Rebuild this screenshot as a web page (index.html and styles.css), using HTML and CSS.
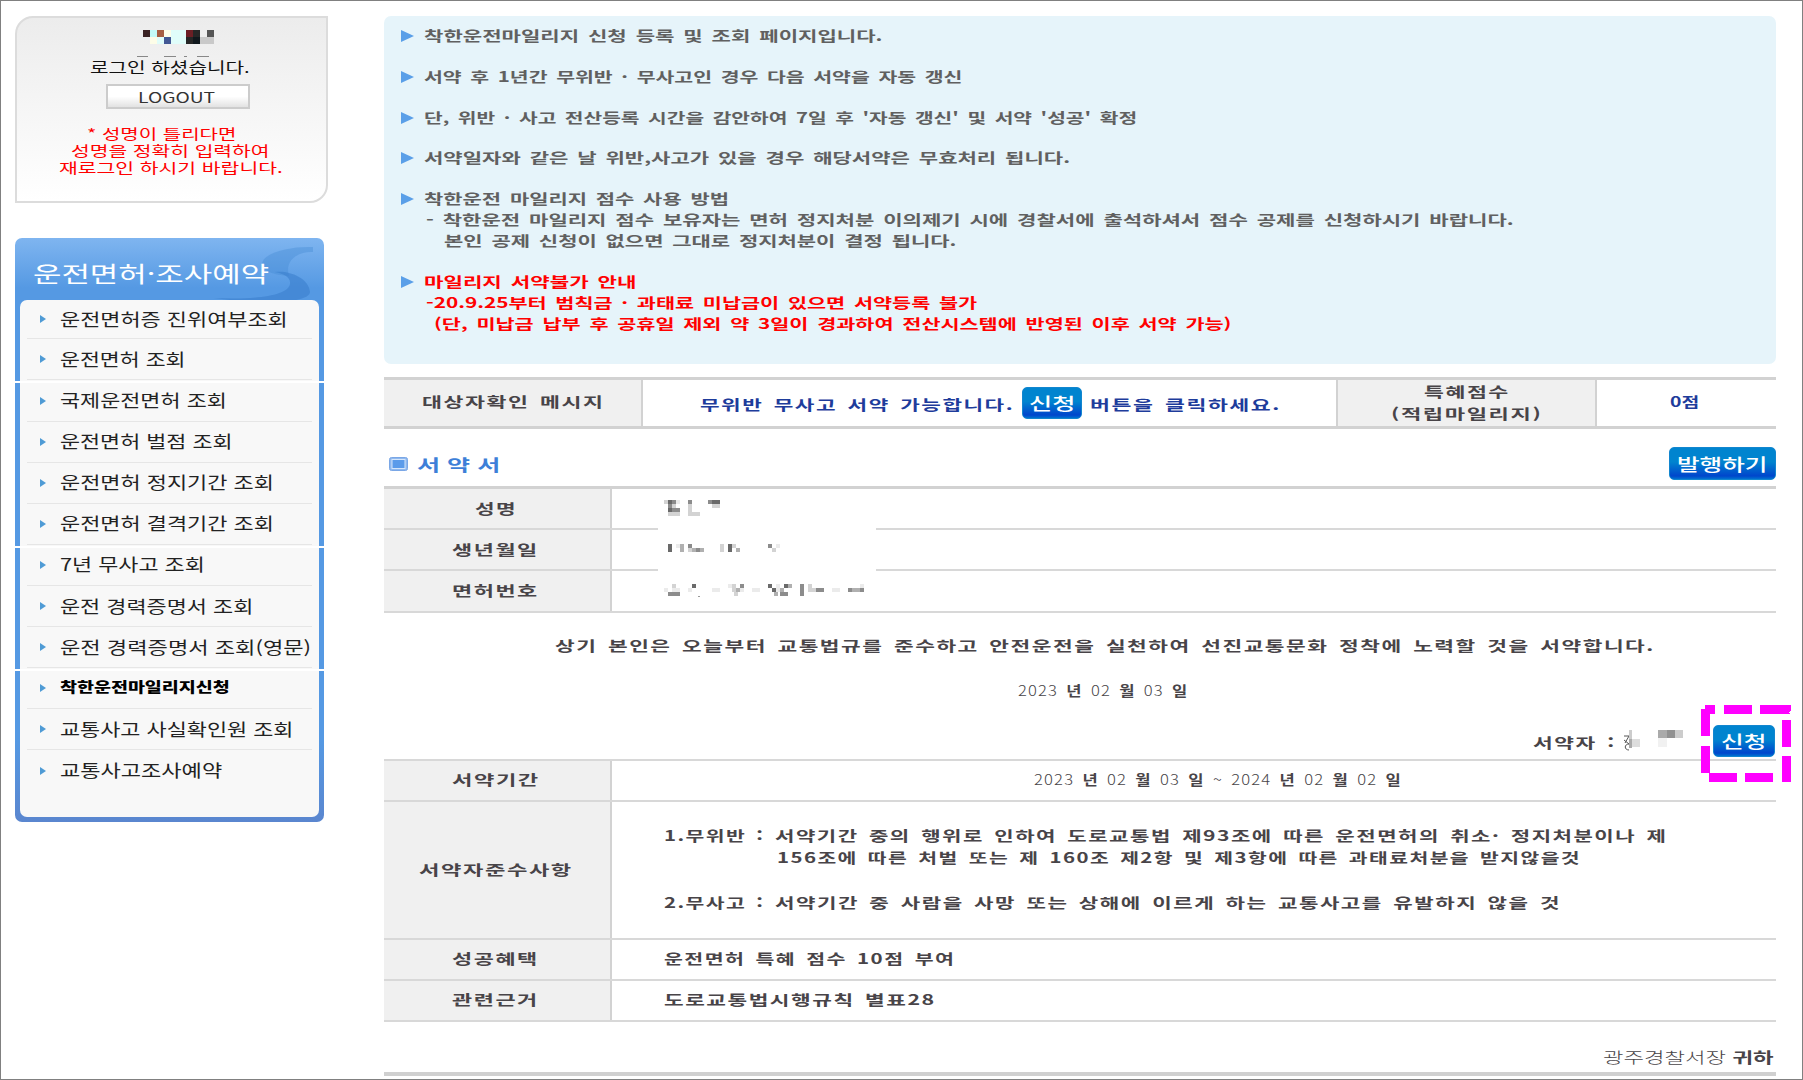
FILE: index.html
```html
<!DOCTYPE html>
<html lang="ko">
<head>
  <meta charset="UTF-8">
  <meta name="viewport" content="width=device-width, initial-scale=1.0">
  <title>착한운전마일리지신청</title>
  <link rel="stylesheet" href="styles.css">
</head>
<body>
  <div class="page">
    <div class="sidebar">
      <div class="login">
        <svg class="user-name" width="72" height="29" shape-rendering="crispEdges">
          <path fill="#3a2224" d="M0 0h7v7H0z"/><path fill="#c3fbf8" d="M7 0h7v7H7z"/><path fill="#a65f43" d="M14 0h7v7h-7z"/><path fill="#fdfde8" d="M21 0h7v7h-7zM7 7h7v7H7z"/>
          <path fill="#e0fdfa" d="M28 0h15v14H28zM14 7h7v7h-7z"/><path fill="#6b1f25" d="M43 0h7v7h-7z"/><path fill="#262626" d="M50 0h7v7h-7zM43 7h7v7h-7z"/><path fill="#555" d="M64 0h7v7h-7z"/>
          <path fill="#425894" d="M21 7h7v7h-7z"/><path fill="#10181d" d="M50 7h7v7h-7z"/><path fill="#c9c9c9" d="M57 7h14v7H57z"/>
          <path fill="#888" d="M-6 26h11v1H-6zM21 26h12v1H21zM41 26h3v1h-3zM54 26h12v1H54z"/>
        </svg>
        <div class="login-msg"><span class="t" data-w="160">로그인 하셨습니다.</span></div>
        <button class="logout"><span class="t" data-w="77">LOGOUT</span></button>
        <div class="warn">
          <div><span class="t" data-w="150">* 성명이 틀리다면</span></div>
          <div><span class="t" data-w="199">성명을 정확히 입력하여</span></div>
          <div><span class="t" data-w="223">재로그인 하시기 바랍니다.</span></div>
        </div>
      </div>

      <div class="menu">
        <div class="menu-title">
          <svg class="swirl" width="110" height="62" viewBox="0 0 110 62">
            <path fill="#3f86d2" opacity=".35" d="M104 9C80 8 54 15 53 26c0 7 12 11 27 12C75 22 90 13 104 14z"/>
            <path fill="#3a7fcd" opacity=".6" d="M66 34c14-2 34 6 35 20 0 10-42 14-96 6 40 2 74-2 76-14 1-6-5-10-15-12z"/>
          </svg>
          <span class="t" data-w="236">운전면허·조사예약</span>
        </div>
        <ul class="menu-list">
          <li><span class="t" data-w="228">운전면허증 진위여부조회</span></li>
          <li class="cut"><span class="t" data-w="126">운전면허 조회</span></li>
          <li><span class="t" data-w="167">국제운전면허 조회</span></li>
          <li><span class="t" data-w="173">운전면허 벌점 조회</span></li>
          <li><span class="t" data-w="214">운전면허 정지기간 조회</span></li>
          <li class="cut"><span class="t" data-w="214">운전면허 결격기간 조회</span></li>
          <li><span class="t" data-w="145">7년 무사고 조회</span></li>
          <li><span class="t" data-w="193">운전 경력증명서 조회</span></li>
          <li class="cut"><span class="t" data-w="251">운전 경력증명서 조회(영문)</span></li>
          <li class="active"><span class="t" data-w="170">착한운전마일리지신청</span></li>
          <li><span class="t" data-w="234">교통사고 사실확인원 조회</span></li>
          <li><span class="t" data-w="162">교통사고조사예약</span></li>
        </ul>
      </div>
    </div>

    <div class="content">
      <ul class="notice">
        <li><span class="t" data-w="459">착한운전마일리지 신청 등록 및 조회 페이지입니다.</span></li>
        <li><span class="t" data-w="538">서약 후 1년간 무위반 · 무사고인 경우 다음 서약을 자동 갱신</span></li>
        <li><span class="t" data-w="713">단, 위반 · 사고 전산등록 시간을 감안하여 7일 후 '자동 갱신' 및 서약 '성공' 확정</span></li>
        <li><span class="t" data-w="646">서약일자와 같은 날 위반,사고가 있을 경우 해당서약은 무효처리 됩니다.</span></li>
        <li>
          <span class="t" data-w="305">착한운전 마일리지 점수 사용 방법</span>
          <p class="dash"><span class="t" data-w="1088">- 착한운전 마일리지 점수 보유자는 면허 정지처분 이의제기 시에 경찰서에 출석하셔서 점수 공제를 신청하시기 바랍니다.</span></p>
          <p class="indent"><span class="t" data-w="512">본인 공제 신청이 없으면 그대로 정지처분이 결정 됩니다.</span></p>
        </li>
        <li class="red">
          <span class="t" data-w="213">마일리지 서약불가 안내</span>
          <p class="dash"><span class="t" data-w="551">-20.9.25부터 범칙금 · 과태료 미납금이 있으면 서약등록 불가</span></p>
          <p class="paren"><span class="t" data-w="797">(단, 미납금 납부 후 공휴일 제외 약 3일이 경과하여 전산시스템에 반영된 이후 서약 가능)</span></p>
        </li>
      </ul>

      <div class="status">
        <div class="status-label"><span class="t" data-w="181">대상자확인 메시지</span></div>
        <div class="status-msg">
          <span class="t" data-w="313">무위반 무사고 서약 가능합니다.</span>
          <button class="btn btn-apply"><span class="t" data-w="46">신청</span></button>
          <span class="t" data-w="190">버튼을 클릭하세요.</span>
        </div>
        <div class="status-label point">
          <span class="t" data-w="85">특혜점수</span>
          <span class="t" data-w="150">(적립마일리지)</span>
        </div>
        <div class="status-point"><span class="t" data-w="29">0점</span></div>
      </div>

      <div class="heading">
        <svg width="19" height="14" viewBox="0 0 19 14">
          <rect x=".5" y=".5" width="18" height="13" rx="2" fill="#8fb8ee" stroke="#7aa7e6"/>
          <rect x="3" y="2.5" width="13" height="9" fill="#5b9bea" stroke="#d5e6fb"/>
        </svg>
        <span class="t" data-w="83">서 약 서</span>
        <button class="btn btn-issue"><span class="t" data-w="91">발행하기</span></button>
      </div>

      <div class="table personal">
        <div class="tr"><div class="th"><span class="t" data-w="41">성명</span></div><div class="td"></div></div>
        <div class="tr"><div class="th"><span class="t" data-w="86">생년월일</span></div><div class="td"></div></div>
        <div class="tr"><div class="th"><span class="t" data-w="86">면허번호</span></div><div class="td"></div></div>
        <svg class="mask" width="224" height="110" shape-rendering="crispEdges">
          <path fill="#fff" d="M2 0h218v110H2z"/>
          <path fill="#6a6a6a" d="M12 6h4v4h-4zM56 6h8v4h-8zM12 14h4v4h-4zM12 50h4v8h-4zM72 50h4v8h-4zM36 90h4v4h-4zM112 90h4v4h-4zM128 90h4v4h-4zM116 94h4v4h-4z"/>
          <path fill="#8c8c8c" d="M16 6h4v4h-4zM32 6h4v4h-4zM52 6h4v4h-4zM12 10h4v4h-4zM16 14h8v4h-8zM32 50h4v4h-4zM40 54h4v4h-4zM112 50h4v4h-4zM12 98h12v4H12zM144 90h4v12h-4zM192 94h4v4h-4zM204 94h4v4h-4zM160 94h8v4h-8zM84 90h4v4h-4zM124 98h8v4h-8z"/>
          <path fill="#b0b0b0" d="M24 50h4v8h-4zM36 54h4v4h-4zM44 54h4v4h-4zM80 54h4v4h-4zM80 94h4v4h-4zM124 94h4v4h-4zM132 90h4v4h-4zM118 98h4v4h-4zM196 94h8v4h-8z"/>
          <path fill="#d3d3d3" d="M8 6h4v4H8zM16 10h4v4h-4zM32 10h4v8h-4zM56 10h8v4h-8zM12 18h12v4H12zM32 18h12v4H32zM32 54h4v4h-4zM64 50h4v8h-4zM76 50h4v4h-4zM116 54h4v4h-4zM16 90h4v4h-4zM76 90h4v8h-4zM78 98h4v4h-4zM152 90h4v8h-4zM156 94h4v4h-4z"/>
          <path fill="#ebebeb" d="M20 6h4v4h-4zM20 50h4v4h-4zM120 50h4v4h-4zM8 94h4v4H8zM16 94h8v4h-8zM32 94h4v4h-4zM56 94h8v4h-8zM72 90h4v4h-4zM84 94h4v4h-4zM96 94h8v4h-8zM120 90h4v8h-4zM176 94h8v4h-8zM204 90h4v4h-4z"/>
          <path fill="#999" d="M42 102h2v1h-2z"/>
        </svg>
      </div>

      <div class="pledge">
        <div class="pledge-text"><span class="t" data-w="1098">상기 본인은 오늘부터 교통법규를 준수하고 안전운전을 실천하여 선진교통문화 정착에 노력할 것을 서약합니다.</span></div>
        <div class="pledge-date"><span class="t" data-w="169"><i>2023</i> 년 <i>02</i> 월 <i>03</i> 일</span></div>
        <div class="signer">
          <span class="t" data-w="81">서약자 :</span>
          <svg width="45" height="22" shape-rendering="crispEdges">
            <path fill="none" stroke="#555" shape-rendering="auto" d="M2 6h5l-4 7M2 10l5 4M7 14c-5 0-5 6 0 6"/>
            <path fill="#ccc" d="M7 0h3v9H7z"/><path fill="#aaa" d="M7 9h3v9H7zM36 0h9v8h-9z"/><path fill="#ddd" d="M10 9h8v8h-8z"/>
            <path fill="#f1f1f1" d="M36 8h9v9h-9z"/>
          </svg>
          <svg width="16" height="22" shape-rendering="crispEdges"><path fill="#919191" d="M0 0h8v8H0z"/><path fill="#ccc" d="M8 0h8v8H8z"/></svg>
          <button class="btn btn-sign"><span class="t" data-w="45">신청</span></button>
        </div>
      </div>

      <div class="table terms">
        <div class="tr"><div class="th"><span class="t" data-w="87">서약기간</span></div>
          <div class="td period"><span class="t" data-w="367"><i>2023</i> 년 <i>02</i> 월 <i>03</i> 일 <i>~ 2024</i> 년 <i>02</i> 월 <i>02</i> 일</span></div></div>
        <div class="tr rules"><div class="th"><span class="t" data-w="152">서약자준수사항</span></div>
          <div class="td">
            <div class="rule">
              <span class="t" data-w="99">1.무위반 :</span>
              <div>
                <span class="t" data-w="891">서약기간 중의 행위로 인하여 도로교통법 제93조에 따른 운전면허의 취소· 정지처분이나 제</span>
                <span class="t second" data-w="803">156조에 따른 처벌 또는 제 160조 제2항 및 제3항에 따른 과태료처분을 받지않을것</span>
              </div>
            </div>
            <div class="rule">
              <span class="t" data-w="99">2.무사고 :</span>
              <div><span class="t" data-w="784">서약기간 중 사람을 사망 또는 상해에 이르게 하는 교통사고를 유발하지 않을 것</span></div>
            </div>
          </div></div>
        <div class="tr"><div class="th"><span class="t" data-w="86">성공혜택</span></div>
          <div class="td"><span class="t" data-w="290">운전면허 특혜 점수 10점 부여</span></div></div>
        <div class="tr"><div class="th"><span class="t" data-w="86">관련근거</span></div>
          <div class="td"><span class="t" data-w="270">도로교통법시행규칙 별표28</span></div></div>
      </div>

      <div class="receiver"><span class="t" data-w="171"><i>광주경찰서장</i> 귀하</span></div>
    </div>

    <svg class="marker" width="90" height="78" shape-rendering="crispEdges">
      <path fill="#f0f" d="M4 0h10v9H4zM23 0h28v9H23zM59 0h31v6l-3 1 3 2H59zM0 4h9v27H0zM0 41h9v27H0zM81 15h9v27h-9zM81 51h9v26h-9zM8 68h28v9H8zM44 68h28v9H44z"/>
    </svg>
  </div>
  <script src="fit.js"></script>
</body>
</html>
```
FILE: styles.css
```css
* {
  box-sizing: border-box;
}
body {
  margin: 0;
  background: #fff;
  font-family: "Noto Sans CJK KR", "Liberation Sans", sans-serif;
  font-size: 14px;
  color: #484448;
}
ul {
  list-style: none;
  margin: 0;
  padding: 0;
}
p {
  margin: 0;
}
i {
  font-style: normal;
  font-weight: 300;
}
button {
  font-family: inherit;
  border: none;
  padding: 0;
  cursor: pointer;
}
.t {
  display: inline-block;
  white-space: pre;
  transform-origin: 0 50%;
}
.page {
  position: relative;
  display: flex;
  width: 1803px;
  height: 1080px;
  border: 1px solid #808080;
  padding: 15px 0 0 14px;
  overflow: hidden;
}

/* left column */
.sidebar {
  width: 368.6px;
  flex: none;
}
.login {
  width: 312.5px;
  height: 187px;
  padding-top: 12px;
  border: 2px solid #dcdcdc;
  border-radius: 18px 0 18px 0;
  background: linear-gradient(#ececec, #fff);
  display: flex;
  flex-direction: column;
}
.user-name {
  margin-left: 126px;
  overflow: visible;
  flex: none;
}
.login-msg {
  margin-left: 73px;
  height: 20px;
  line-height: 16px;
  color: #111;
}
.login-msg .t {
  font-size: 15px;
}
.logout {
  width: 144px;
  height: 25px;
  margin: 5px 0 0 89px;
  padding-right: 2px;
  border: 2px solid #ccc;
  background: linear-gradient(#fff 50%, #e2e2e2);
  color: #333;
  font-size: 14px;
  line-height: 18px;
}
.logout .t {
  margin-top: -3px;
}
.warn {
  margin-top: 16px;
  padding-right: 2px;
  color: #f00;
  text-align: center;
  line-height: 17px;
}
.warn div:first-child {
  padding-right: 16px;
}
.menu {
  width: 309px;
  height: 584px;
  margin-top: 35px;
  padding: 0 5px;
  border-radius: 7px;
  background: linear-gradient(#7fb5f0, #5599e3 50px, #5599e3 500px, #5a86cf);
}
.menu-title {
  position: relative;
  height: 62px;
  padding: 0 0 0 13px;
  color: #fff;
  font-size: 22px;
  font-weight: 400;
  line-height: 68px;
}
.swirl {
  position: absolute;
  right: 0;
  top: 0;
}
.menu-title .t {
  position: relative;
}
.menu-list {
  height: 517px;
  border-radius: 7px;
  background: #f8f8f8;
}
.menu-list li {
  position: relative;
  display: flex;
  align-items: center;
  height: 41.1px;
  margin: 0 7px;
  padding-left: 13px;
  border-bottom: 1px solid #e6e6e6;
  font-size: 17px;
  line-height: 24px;
  color: #222;
}
.menu-list li:first-child {
  height: 39.4px;
}
.menu-list li:last-child {
  border: none;
}
.menu-list li::before {
  content: "";
  width: 0;
  margin-right: 14px;
  border: solid transparent;
  border-width: 4px 0 4px 6px;
  border-left-color: #4f9bd5;
}
.menu-list li .t {
  margin-top: -1px;
}
.menu-list li.active {
  font-size: 14px;
  font-weight: 900;
  color: #000;
}
.menu-list li.active .t {
  margin-top: -5px;
}
.menu-list li.cut::after {
  content: "";
  position: absolute;
  left: -13px;
  right: -13px;
  bottom: -4px;
  height: 2px;
  background: #fff;
}

/* guide box */
.content {
  width: 1392px;
  flex: none;
}
.notice {
  height: 348px;
  padding: 9px 0 0 17px;
  border-radius: 7px;
  background: #e6f4fa;
  font-weight: 700;
  color: #606060;
  line-height: 21px;
  word-spacing: 2px;
}
.notice li {
  position: relative;
  padding-left: 23px;
  height: 21px;
  margin-bottom: 19.8px;
}
.notice li::before {
  content: "";
  position: absolute;
  left: 0;
  top: 5px;
  border: solid transparent;
  border-width: 6px 0 6px 13px;
  border-left-color: #5a9fe8;
}
.notice li:nth-child(n+5) {
  height: 63px;
}
.notice .t {
  display: block;
  width: max-content;
}
.notice .dash {
  padding-left: 2px;
}
.notice .indent {
  padding-left: 20px;
}
.notice .paren {
  padding-left: 10px;
}
.notice .red {
  color: #f00;
}

/* target message */
.status {
  display: flex;
  height: 52px;
  margin-top: 13px;
  border: solid #d2d2d2;
  border-width: 3px 0;
  font-weight: 700;
  word-spacing: 2px;
  letter-spacing: 1px;
}
.status-label {
  width: 259px;
  padding-left: 38px;
  border-right: 2px solid #d2d2d2;
  background: #f0f0f0;
  line-height: 43px;
}
.status-msg {
  display: flex;
  align-items: center;
  width: 693.5px;
  padding: 2px 0 0 57.5px;
  color: #1e3c9b;
}
.status-msg .btn-apply {
  margin: -2px 8px 0 9px;
}
.point {
  width: 261px;
  padding: 0 1px 0 0;
  border-left: 2px solid #d2d2d2;
  line-height: 22px;
  display: flex;
  flex-direction: column;
  align-items: center;
}
.status-point {
  flex: 1;
  padding-left: 73px;
  color: #1e3c9b;
  line-height: 43px;
  letter-spacing: 0;
}
.btn {
  border-radius: 5px;
  border: 1px solid #1286cf;
  background: linear-gradient(#0084cf 45%, #0046cc 90%, #0070d0);
  color: #fff;
  font-size: 17px;
  font-weight: 500;
  line-height: 28px;
  letter-spacing: 0;
  text-align: left;
}
.btn-apply {
  width: 60px;
  height: 32px;
  padding-left: 6px;
}

.heading {
  display: flex;
  align-items: center;
  height: 57px;
  padding: 12px 0 0 5px;
  color: #3d7fd8;
  font-size: 16px;
  font-weight: 700;
}
.heading > .t {
  margin-left: 9px;
}
.btn-issue {
  width: 107px;
  height: 33px;
  margin-left: auto;
  padding-left: 7px;
}

/* pledge tables */
.table {
  position: relative;
  font-weight: 700;
  letter-spacing: 1px;
  word-spacing: 2px;
}
.personal {
  border-top: 3px solid #d2d2d2;
}
.tr {
  display: flex;
  height: 41px;
  border-bottom: 2px solid #d8d8d8;
}
.personal .tr:nth-child(3) {
  height: 42px;
}
.th {
  display: flex;
  align-items: center;
  justify-content: center;
  width: 228px;
  padding: 0 3px 2px 0;
  border-right: 2px solid #d2d2d2;
  background: #f0f0f0;
}
.td {
  display: flex;
  align-items: center;
  flex: 1;
  padding: 0 0 2px 52px;
}
.mask {
  position: absolute;
  left: 272.5px;
  top: 5px;
}
.pledge {
  height: 145.5px;
  padding-top: 19px;
  font-weight: 700;
  letter-spacing: 1px;
  word-spacing: 2px;
  line-height: 26px;
}
.pledge-text {
  padding-left: 171px;
}
.pledge-date {
  margin-top: 19px;
  padding-left: 634.5px;
}
.signer {
  display: flex;
  align-items: center;
  height: 32px;
  margin-top: 21.5px;
  padding-left: 1149.5px;
}
.signer > .t {
  margin-top: 3px;
}
.signer .t + svg {
  margin-left: 8px;
}
.signer svg {
  margin-top: 0;
}
.btn-sign {
  width: 62px;
  height: 32px;
  margin-left: auto;
  margin-right: 1px;
  padding-left: 7px;
}
.terms {
  border-top: 2px solid #d8d8d8;
}
.td.period {
  padding-left: 422px;
}
.tr.rules {
  height: 138px;
}
.rules .td {
  flex-direction: column;
  align-items: flex-start;
  justify-content: center;
  gap: 24px;
  padding-bottom: 0;
  line-height: 21.5px;
}
.rule {
  display: flex;
  align-items: flex-start;
  gap: 12px;
}
.rule .t {
  display: block;
  width: max-content;
}
.rule .second {
  margin-left: 2px;
}
.receiver {
  display: flex;
  justify-content: flex-end;
  height: 54px;
  padding: 25px 2px 0 0;
  border-bottom: 4px solid #d0d0d0;
  font-weight: 700;
  font-size: 15px;
  line-height: 20px;
}

/* highlight around the apply button */
.marker {
  position: absolute;
  left: 1700px;
  top: 704px;
}
```
FILE: fit.js
```js
document.querySelectorAll('.t').forEach(function (el) {
  const width = parseFloat(el.dataset.w);
  const spacing = parseFloat(getComputedStyle(el).letterSpacing) || 0;
  const natural = el.offsetWidth;
  el.style.transform = 'scaleX(' + width / (natural - spacing) + ')';
  el.style.marginRight = (width - natural) + 'px';
});
```
